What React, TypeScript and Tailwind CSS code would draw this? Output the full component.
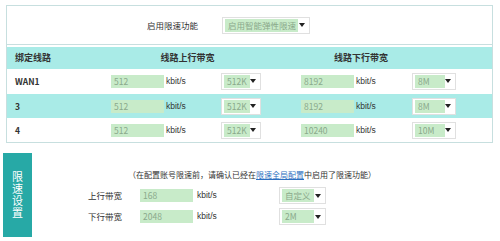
import React from 'react'

const font = "font-['Microsoft_YaHei','Noto_Sans_CJK_SC','Liberation_Sans',sans-serif]"

const Arrow = () => (
  <svg width="6" height="4" viewBox="0 0 6 4" className="shrink-0">
    <path d="M0 0h6L3 4z" fill="#222" />
  </svg>
)

interface FakeSelectProps {
  value: string
  width: string
  fill: string
}

const FakeSelect = ({ value, width, fill }: FakeSelectProps) => (
  <div className={`flex h-[17px] shrink-0 items-center border border-[#e0e0e0] bg-white pl-[2px] pr-[4px] ${width}`}>
    <div className={`flex h-[13px] shrink-0 items-center overflow-hidden whitespace-nowrap bg-[#c8ebc9] pl-[3px] text-[8.5px] text-[#8aa98b] ${fill}`}>
      {value}
    </div>
    <div className="flex-1" />
    <Arrow />
  </div>
)

const FakeInput = ({ value, width }: { value: string; width: string }) => (
  <div className={`flex h-[13px] shrink-0 items-center bg-[#c8ebc9] pl-[3px] text-[8.5px] text-[#8aa98b] ${width}`}>
    {value}
  </div>
)

interface Row {
  name: string
  up: string
  upSel: string
  down: string
  downSel: string
}

const rows: Row[] = [
  { name: 'WAN1', up: '512', upSel: '512K', down: '8192', downSel: '8M' },
  { name: '3', up: '512', upSel: '512K', down: '8192', downSel: '8M' },
  { name: '4', up: '512', upSel: '512K', down: '10240', downSel: '10M' },
]

export default function App() {
  return (
    <div className={`h-[241px] w-[500px] bg-white pt-[5px] text-[#333] ${font}`}>
      <div className="ml-[6px] w-[487px] border border-[#c7dfdf]">
        <div className="flex h-[39px] items-center border-b border-[#c7dfdf] pl-[140px]">
          <span className="text-[8.5px]">启用限速功能</span>
          <div className="ml-[24px]">
            <FakeSelect value="启用智能弹性限速" width="w-[88px]" fill="w-[73px]" />
          </div>
        </div>
        <div className="mt-[2px] flex h-[22px] items-center bg-[#a9ebe7] text-[9px] font-bold">
          <div className="w-[93px] pl-[8px]">绑定线路</div>
          <div className="w-[175px] text-center">线路上行带宽</div>
          <div className="w-[172px] text-center">线路下行带宽</div>
        </div>
        {rows.map((r, i) => (
          <div
            key={r.name}
            className={`flex h-[24px] items-center ${i === 1 ? 'mt-px bg-[#a9ebe7]' : 'bg-white'}`}
          >
            <div className="w-[104px] pl-[8px] text-[8.5px] font-bold">{r.name}</div>
            <FakeInput value={r.up} width="w-[53px]" />
            <span className="ml-[2px] w-[55px] font-['Liberation_Sans',sans-serif] text-[8.5px]">kbit/s</span>
            <FakeSelect value={r.upSel} width="w-[40px]" fill="w-[26px]" />
            <div className="w-[40px]" />
            <FakeInput value={r.down} width="w-[53px]" />
            <span className="ml-[2px] w-[56px] font-['Liberation_Sans',sans-serif] text-[8.5px]">kbit/s</span>
            <FakeSelect value={r.downSel} width="w-[44px]" fill="w-[30px]" />
          </div>
        ))}
      </div>

      <div className="mt-[10px] flex">
        <div className="ml-[3px] flex h-[84px] w-[29px] items-center justify-center bg-[#27a9a6] text-white">
          <span className="text-[11px] leading-[12px] tracking-[1px] [writing-mode:vertical-rl]">限速设置</span>
        </div>
        <div className="ml-[56px] flex flex-col pt-[16px]">
          <div className="ml-[40px] h-[12px] whitespace-nowrap text-[8px] leading-[12px]">
            （在配置账号限速前，请确认已经在
            <span className="text-[#2d6fc0] underline">限速全局配置</span>
            中启用了限速功能）
          </div>
          {[
            { label: '上行带宽', v: '168', sel: '自定义' },
            { label: '下行带宽', v: '2048', sel: '2M' },
          ].map((b, i) => (
            <div key={b.label} className={`flex h-[17px] items-center ${i === 0 ? 'mt-[6px]' : 'mt-[4px]'}`}>
              <span className="w-[52px] text-[8.5px]">{b.label}</span>
              <FakeInput value={b.v} width="w-[53px]" />
              <span className="ml-[4px] w-[82px] font-['Liberation_Sans',sans-serif] text-[8.5px]">kbit/s</span>
              <FakeSelect value={b.sel} width="w-[47px]" fill="w-[32px]" />
            </div>
          ))}
        </div>
      </div>
    </div>
  )
}
